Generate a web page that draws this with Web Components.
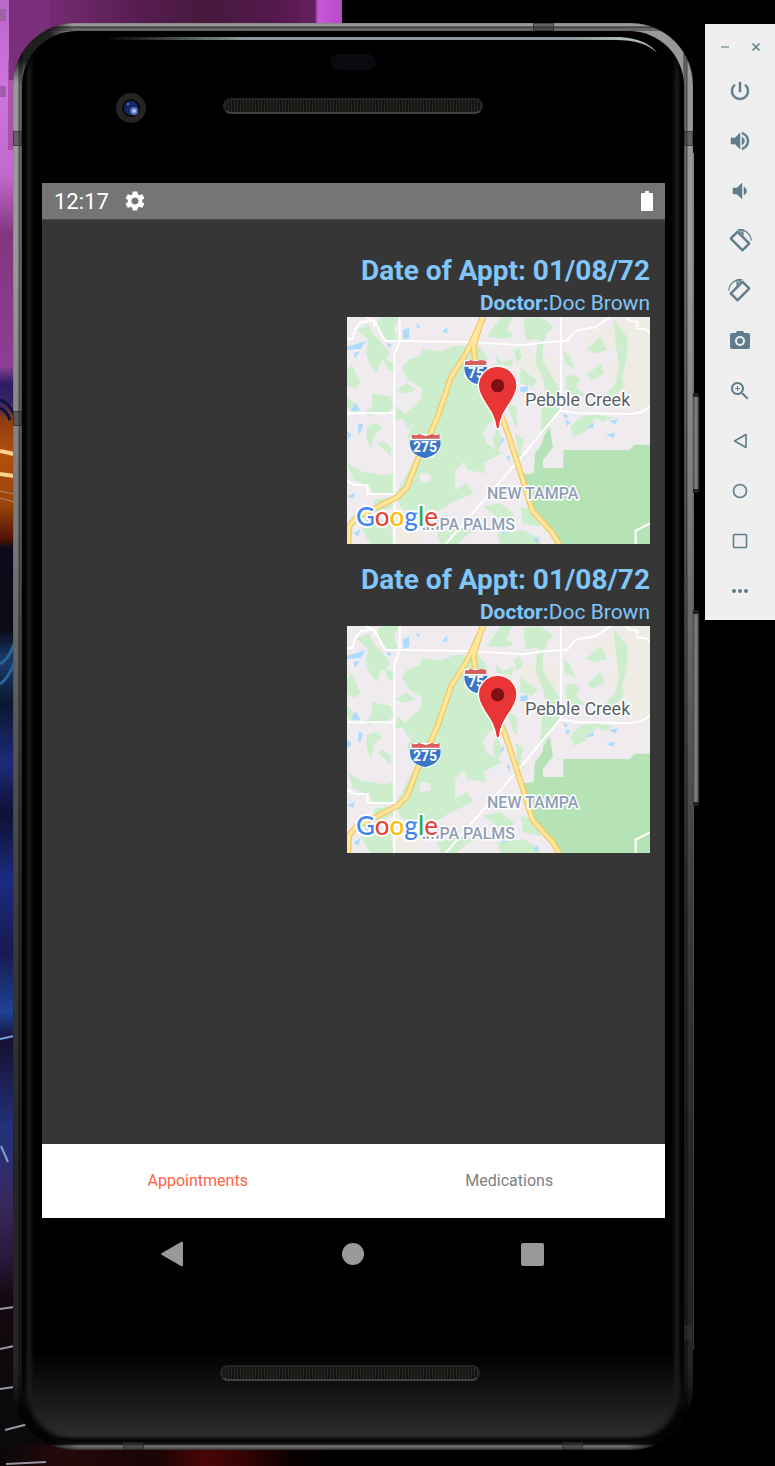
<!DOCTYPE html>
<html lang="en">
<head>
<meta charset="utf-8">
<meta name="viewport" content="width=device-width, initial-scale=1">
<title>Appointments</title>
<style>
body { margin: 0; background: #000; font-family: Roboto, "Liberation Sans", sans-serif; }
</style>
</head>
<body>
<emulator-desktop>
  <desk-wallpaper slot="wallpaper"></desk-wallpaper>
  <phone-frame>
    <status-bar slot="screen" time="12:17"></status-bar>
    <appointment-list slot="screen">
      <appointment-card date="01/08/72" doctor="Doc Brown"></appointment-card>
      <appointment-card date="01/08/72" doctor="Doc Brown"></appointment-card>
    </appointment-list>
    <tab-bar slot="screen"></tab-bar>
    <system-nav slot="nav"></system-nav>
  </phone-frame>
  <emulator-toolbar></emulator-toolbar>
</emulator-desktop>

<script>
const define = (name, html, setup) => {
  const template = document.createElement('template');
  template.innerHTML = html;
  customElements.define(name, class extends HTMLElement {
    constructor() {
      super();
      this.attachShadow({ mode: 'open' }).append(template.content.cloneNode(true));
    }
    connectedCallback() {
      if (setup) setup(this, this.shadowRoot);
    }
  });
};

define('emulator-desktop', `
<style>
:host { display: flex; align-items: flex-start; gap: 12px; position: relative; min-height: 100vh; box-sizing: border-box; padding: 23px 0 16px 13px; overflow: hidden; }
</style>
<slot name="wallpaper"></slot>
<slot></slot>`);

define('desk-wallpaper', `
<style>
:host { display: block; position: absolute; inset: 0 auto 0 0; width: 342px; }
svg { display: block; width: 100%; height: 100%; }
</style>
<svg viewBox="0 0 342 1466" preserveAspectRatio="none" aria-hidden="true">
  <defs>
    <linearGradient id="top" x1="0" x2="1" y1="0" y2="0">
      <stop offset="0" stop-color="#b55fc4"/><stop offset=".03" stop-color="#7b2d78"/><stop offset=".2" stop-color="#6f286b"/>
      <stop offset=".42" stop-color="#551c50"/><stop offset=".6" stop-color="#461a3c"/><stop offset=".82" stop-color="#56184f"/>
      <stop offset=".92" stop-color="#64205f"/><stop offset=".93" stop-color="#c659d6"/><stop offset="1" stop-color="#b84cc8"/>
    </linearGradient>
    <linearGradient id="left" x1="0" x2="0" y1="0" y2="1">
      <stop offset="0" stop-color="#b968c9"/><stop offset=".06" stop-color="#cf74dc"/><stop offset=".12" stop-color="#c169cc"/>
      <stop offset=".16" stop-color="#83357f"/><stop offset=".25" stop-color="#8c3f93"/><stop offset=".262" stop-color="#2b1c68"/>
      <stop offset=".275" stop-color="#3a2563"/><stop offset=".285" stop-color="#8a3b12"/><stop offset=".31" stop-color="#b34f0c"/>
      <stop offset=".345" stop-color="#99430a"/><stop offset=".368" stop-color="#4f1206"/><stop offset=".374" stop-color="#0d0b1b"/>
      <stop offset=".43" stop-color="#0a0a18"/><stop offset=".45" stop-color="#1a3c6c"/><stop offset=".48" stop-color="#0b1730"/>
      <stop offset=".52" stop-color="#1d2a7a"/><stop offset=".555" stop-color="#0d1034"/><stop offset=".6" stop-color="#1c2b80"/>
      <stop offset=".65" stop-color="#171a52"/><stop offset=".69" stop-color="#1f4393"/><stop offset=".71" stop-color="#161032"/>
      <stop offset=".77" stop-color="#23327b"/><stop offset=".82" stop-color="#39285e"/><stop offset=".86" stop-color="#2a1638"/>
      <stop offset=".885" stop-color="#140910"/><stop offset="1" stop-color="#0a0508"/>
    </linearGradient>
    <linearGradient id="foot" x1="0" x2="1" y1="0" y2="0">
      <stop offset="0" stop-color="#08080b"/><stop offset=".16" stop-color="#25080a"/><stop offset=".45" stop-color="#1a0405"/>
      <stop offset=".6" stop-color="#480606"/><stop offset=".72" stop-color="#320303"/><stop offset=".86" stop-color="#080000"/><stop offset="1" stop-color="#000"/>
    </linearGradient>
  </defs>
  <rect width="342" height="60" fill="url(#top)"/>
  <path d="M0 0H14V1466H0z" fill="url(#left)"/>
  <path d="M9 0H50V24L14 80H9z" fill="#7a2f7a"/>
  <rect x="8" y="60" width="6" height="90" fill="#83387f" opacity=".5"/>
  <rect y="9" width="6" height="12" fill="#9d63a6"/>
  <rect y="86" width="6" height="11" fill="#a35bab"/>
  <path d="M0 400q8 2 14 14M0 408q7 3 10 12" stroke="#0e1248" stroke-width="3" fill="none"/>
  <path d="M0 451l14 3M0 474l14 2" stroke="#ffd391" stroke-width="4"/>
  <path d="M0 491l14 3M0 498l14 4" stroke="#b4886f" stroke-width="1"/>
  <path d="M0 664q9-5 14-20M0 684q8-5 14-21" stroke="#2a6599" stroke-width="3" fill="none"/>
  <path d="M0 1039l14-3M1 1146l7 16" stroke="#79a0dc" stroke-width="2"/>
  <path d="M0 1380H20L80 1440V1466H0z" fill="#0b090c"/>
  <path d="M0 1445H342V1466H0z" fill="url(#foot)"/>
  <path d="M0 1309l14-2M0 1349l14-3M0 1389l14-2M5 1430l31-8M6 1464l40-2" stroke="#99959f" stroke-width="2"/>
</svg>`);

define('phone-frame', `
<style>
:host { display: block; flex: 1; min-width: 0; position: relative; }
.metal { position: relative; border-radius: 62px; padding: 8px 9px 8px;
  background:
   radial-gradient(circle at 18px 18px, #000c 0 20px, #0000 44px),
   radial-gradient(circle at 18px calc(100% - 18px), #000c 0 20px, #0000 50px),
   radial-gradient(circle at calc(100% - 18px) calc(100% - 18px), #000c 0 20px, #0000 50px),
   linear-gradient(180deg, #0000 3px, #222 4px, #0005 5px 8px, #0000 8px),
   linear-gradient(90deg, #0000 0 5px, #0008 6px, #0004 8px, #0009 9px, #0000 10px calc(100% - 10px), #0009 calc(100% - 9px), #0004 calc(100% - 8px), #0008 calc(100% - 6px), #0000 calc(100% - 5px)),
   linear-gradient(180deg, #999 0, #9a9a9a 16%, #777 36%, #555 50%, #3c3c3c 62%, #262626 80%, #242424 94%, #111 98%, #111 calc(100% - 6px), #777 calc(100% - 4px), #333 100%);
  box-shadow: inset 0 0 1px #111; }
.glass { position: relative; display: flex; flex-direction: column; border-radius: 55px; padding-bottom: 61px;
  background:
   linear-gradient(90deg, #0000 2px, #1b1b1b 7px, #0000 12px, #0000 calc(100% - 12px), #1b1b1b calc(100% - 7px), #0000 calc(100% - 2px)),
   linear-gradient(180deg, #000 calc(100% - 90px), #191919 calc(100% - 40px), #2d2d2d calc(100% - 6px), #0a0a0a calc(100% - 2px));
  background-color: #000; box-shadow: inset 0 0 5px 2px #000; }
.head { display: grid; grid-template-columns: 1fr 260px 1fr; align-items: center; justify-items: center; padding-top: 23px; row-gap: 19px; height: 129px; align-content: start; }
.sensor { grid-column: 2; width: 46px; height: 16px; border-radius: 8px; background: #080a10; }
.camera { grid-column: 1; margin: 4px 0 0 16px; width: 30px; height: 30px; }
.speaker { box-sizing: border-box; width: 260px; height: 16px; border: 2px solid #242423; border-bottom-color: #44423f; border-radius: 8px;
  background: repeating-linear-gradient(90deg, #2b2925 0 1px, #151412 1px 3px); }
.screen { display: flex; flex-direction: column; margin: 0 19px 0 20px; height: 1035px; background: #363636; }
.foot { display: grid; justify-items: center; padding: 75px 6px 0 0; }
.band { position: absolute; box-sizing: border-box; background: #3338; border: 1px solid #2228; }
.v { width: 9px; height: 15px; }
.h { width: 21px; height: 8px; }
.button { position: absolute; left: 100%; width: 6px; background: linear-gradient(90deg, #444, #8a8a8a 50%, #333); border-radius: 0 3px 3px 0; border: solid #222; border-width: 4px 0; box-sizing: border-box; }
.edge { position: absolute; left: 100%; top: 130px; width: 1px; bottom: 100px; background: linear-gradient(#888, #555 50%, #333); }
.shine { position: absolute; left: 0; top: 0; width: 100%; height: 40px; }
</style>
<div class="edge"></div>
<div class="button" style="top:370px;height:100px"></div>
<div class="button" style="top:587px;height:196px"></div>
<div class="metal">
  <div class="glass">
    <svg class="shine" viewBox="0 0 662 40" preserveAspectRatio="none" aria-hidden="true">
      <defs><linearGradient id="s" x1="0" x2="1" y1="0" y2="0"><stop offset="0" stop-color="#8b9799" stop-opacity="0"/><stop offset=".25" stop-color="#899598"/><stop offset=".85" stop-color="#899598"/><stop offset=".95" stop-color="#b3c2bf"/><stop offset="1" stop-color="#8d9796"/></linearGradient></defs>
      <path d="M83 6H598Q626 8 635 22Q622 9 594 9H83z" fill="url(#s)"/>
    </svg>
    <div class="head">
      <div class="sensor"></div>
      <svg class="camera" viewBox="0 0 30 30" aria-hidden="true">
        <circle cx="15" cy="15" r="15" fill="#252324"/><circle cx="15" cy="15" r="9" fill="#0a0b13"/>
        <circle cx="15" cy="15" r="7" fill="#142766"/><circle cx="18" cy="18" r="4" fill="#5571bd"/>
        <circle cx="18" cy="18" r="2" fill="#b5c6ee"/><circle cx="12" cy="11" r="1" fill="#7893df"/>
      </svg>
      <div class="speaker"></div>
    </div>
    <div class="screen"><slot name="screen"></slot></div>
    <slot name="nav"></slot>
    <div class="foot"><div class="speaker"></div></div>
  </div>
  <div class="band v" style="left:0;top:108px"></div>
  <div class="band v" style="left:0;top:388px"></div>
  <div class="band v" style="right:0;top:108px"></div>
  <div class="band v" style="right:0;top:1302px"></div>
  <div class="band h" style="right:139px;top:0"></div>
  <div class="band h" style="left:110px;bottom:0"></div>
  <div class="band h" style="right:110px;bottom:0"></div>
</div>`);

define('status-bar', `
<style>
:host { display: flex; align-items: center; gap: 14px; height: 36px; padding: 0 12px; background: #757575; border-bottom: 1px solid #484848; color: #fff; font-size: 22px; line-height: 26px; }
time { padding-top: 2px; }
svg { display: block; }
.gear { width: 24px; height: 24px; }
.battery { width: 12px; height: 20px; margin-left: auto; }
</style>
<time></time>
<svg class="gear" viewBox="0 0 24 24" fill="#fff" role="img" aria-label="Settings"><path d="M19.14 12.94c.04-.3.06-.61.06-.94 0-.32-.02-.64-.07-.94l2.03-1.58c.18-.14.23-.41.12-.61l-1.92-3.32c-.12-.22-.37-.29-.59-.22l-2.39.96c-.5-.38-1.03-.7-1.62-.94l-.36-2.54c-.04-.24-.24-.41-.48-.41h-3.84c-.24 0-.43.17-.47.41l-.36 2.54c-.59.24-1.13.57-1.62.94l-2.39-.96c-.22-.08-.47 0-.59.22L2.74 8.87c-.12.21-.08.47.12.61l2.03 1.58c-.05.3-.09.63-.09.94s.02.64.07.94l-2.03 1.58c-.18.14-.23.41-.12.61l1.92 3.32c.12.22.37.29.59.22l2.39-.96c.5.38 1.03.7 1.62.94l.36 2.54c.05.24.24.41.48.41h3.84c.24 0 .44-.17.47-.41l.36-2.54c.59-.24 1.13-.56 1.62-.94l2.39.96c.22.08.47 0 .59-.22l1.92-3.32c.12-.22.07-.47-.12-.61l-2.01-1.58zM12 15.6c-1.98 0-3.6-1.62-3.6-3.6s1.62-3.6 3.6-3.6 3.6 1.62 3.6 3.6-1.62 3.6-3.6 3.6z"/></svg>
<svg class="battery" viewBox="0 0 12 20" fill="#fff" role="img" aria-label="Battery full"><path d="M4 0h4v2h3a1 1 0 0 1 1 1v16a1 1 0 0 1-1 1H1a1 1 0 0 1-1-1V3a1 1 0 0 1 1-1h3z"/></svg>`,
(el, root) => { root.querySelector('time').textContent = el.getAttribute('time'); });

define('appointment-list', `
<style>
:host { display: flex; flex-direction: column; align-items: flex-end; gap: 17px; flex: 1; padding: 32px 15px 0 0; }
</style>
<slot></slot>`);

define('appointment-card', `
<style>
:host { display: flex; flex-direction: column; align-items: flex-end; color: #81c6fb; }
h2 { margin: 0; font-size: 28px; line-height: 37px; font-weight: 700; }
p { margin: 0; font-size: 21px; line-height: 28px; }
</style>
<h2>Date of Appt: <span class="date"></span></h2>
<p><b>Doctor:</b><span class="doctor"></span></p>
<map-view></map-view>`,
(el, root) => {
  root.querySelector('.date').textContent = el.getAttribute('date');
  root.querySelector('.doctor').textContent = el.getAttribute('doctor');
});

define('map-view', `
<style>
:host { display: block; width: 303px; }
svg { display: block; width: 100%; }
text { paint-order: stroke; stroke: #fff; stroke-width: 3px; stroke-linejoin: round; }
.area { fill: #8f9db5; font-size: 16px; font-weight: 500; }
.place { fill: #5a5f66; font-size: 18px; }
.route { fill: #fff; stroke: none; font-size: 14px; font-weight: 700; text-anchor: middle; }
.brand { font: 500 26px Lato, sans-serif; stroke-width: 4px; }
</style>
<svg viewBox="0 0 303 227" role="img" aria-label="Map of New Tampa">
  <rect width="303" height="227" fill="#efebef"/>
  <g transform="scale(.33333) translate(-20 -231)">
    <path fill="#efece6" d="M720 300L800 262 850 231H929V500L890 510 840 490 800 400 840 330zM540 340L650 350V418H540zM160 790L240 850 235 912H160z"/>
    <g fill="#cdeecd">
      <path d="M235 350L248 328 300 334 350 316 385 322 400 300 440 350 444 390 470 540 446 548 428 580 440 612 486 640 430 668 436 700 380 690 372 664 345 690 344 752 378 728 400 760 330 790 300 810 240 850 180 800 165 766 200 700 226 650 200 590 216 560 196 520 240 480 246 446 204 420 184 384 205 358z"/>
      <path d="M118 231H178L160 262 172 300 140 300 104 262zM50 270L84 252 100 282 150 340 140 356 120 366 110 400 86 370 76 336 84 300zM20 390L34 372 60 430 44 446 20 436zM130 356L162 370 160 400 140 384zM96 460L150 470 160 500 140 520 102 516 92 530 70 520 94 500zM20 470L60 510 40 518 20 500zM80 558L110 548 126 566 104 580 92 628 78 596zM110 610L130 604 154 624 150 648 130 626zM20 668L60 694 130 706 160 700V764L96 766 90 740 40 720zM100 780L160 770 158 800 110 820zM60 860L100 830 150 850 160 912H90zM170 500L214 540 208 570 186 536 164 540zM166 450L200 430 226 450 190 462z"/>
      <path d="M440 290L480 231H516L500 270 520 288 486 296zM548 236L600 231 640 260 620 280 610 310 590 296 556 300zM590 316L610 300 606 360 628 400 656 440 662 500 620 570 600 590 604 510 618 470 608 420 586 366zM520 330L538 322 546 350 530 366zM464 344L486 366 520 354 514 380 470 372zM668 330L690 350 706 390 674 370zM674 410L700 402 720 420 706 440 740 470 680 462zM736 330L780 290 800 330 766 340zM740 404L780 370 792 400 756 420zM820 240L860 290 860 350 846 410 850 440 810 480 790 470 826 430 836 380 826 310zM540 380L560 400 590 420 576 440 540 430zM690 560L720 530 780 520 730 580 700 590zM760 524L820 532 786 546z"/>
      <path d="M500 490L528 500 532 560 520 550zM524 580L550 600 540 640 560 660 534 650zM470 560L486 600 470 640 456 600zM430 800L480 790 520 820 510 850 480 840zM540 800L590 812 600 860 548 850zM470 880L550 870 600 900V912H480zM566 700L600 690 590 730zM360 860L400 870 350 912H300L290 880z"/>
    </g>
    <path fill="#b5e3b5" d="M669 630H868L882 614H929V912H660L640 880 580 812 545 702H580L584 640 606 610 610 590 628 562 638 622 608 660V684H669z"/>
    <path fill="#efebef" d="M236 706L244 698 270 704 272 724 238 730 240 716z"/>
    <g fill="#abdbff">
      <path d="M20 320L76 304 62 326 20 330zM40 340L58 334 44 356zM187 272L206 262 207 292 190 300zM228 250L241 262 230 264zM306 276L320 260 321 280zM138 310L156 312 146 324zM46 488L60 512 32 512zM54 550L68 552 62 576 54 582zM20 572L34 584 22 600zM20 768L44 760 38 776zM70 826L90 830 80 850zM40 880L60 868 54 890zM540 442L562 438 562 458 540 456zM666 520L684 528 676 536zM674 540L690 546 680 558zM736 564L760 548 760 562zM808 542L834 538 824 554zM796 584L824 578 820 594zM486 590L492 600 478 616zM498 650L508 648 508 668zM482 870L500 878 488 886zM580 896L596 890 590 912z"/>
    </g>
    <g fill="none" stroke="#fff" stroke-width="6">
      <path d="M20 298H36L44 268 62 246 102 242 134 302 390 306 550 316 600 308 680 302 706 272 764 262 812 231M76 231L102 244V262M178 231V306L162 342V912M20 520H162M20 722L40 734 82 736V762H162M662 231V508L536 660 316 912M662 512L716 520 874 522 904 516 929 500M856 231L870 242 892 246 890 266 918 268 929 280M886 912V872L929 850"/>
    </g>
    <g fill="none" stroke-linejoin="round">
      <path stroke="#efc765" stroke-width="18" d="M430 231L380 336 332 412 292 530 256 612 232 658 200 742 172 770 110 802 50 830 26 860 24 912M426 231L400 320 404 362M480 520L504 584 546 714 576 812 636 878 656 912"/>
      <path stroke="#ffe69a" stroke-width="11" d="M430 231L380 336 332 412 292 530 256 612 232 658 200 742 172 770 110 802 50 830 26 860 24 912M426 231L400 320 404 362M480 520L504 584 546 714 576 812 636 878 656 912"/>
    </g>
    <g>
      <path fill="#fff" d="M370 360H440V384L438 412Q428 428 408 436 384 430 372 408z"/>
      <path fill="#d75f5c" d="M374 362Q382 366 390 360L406 364 422 360 438 362V375H374z"/>
      <path fill="#3976ca" d="M372 380H440Q440 424 408 432 372 420 372 380z"/>
      <path fill="#fff" d="M212 582H300V630L280 650 254 658 226 646 208 620z"/>
      <path fill="#d75f5c" d="M214 582Q224 590 236 582L256 588 276 582Q288 588 298 582V596H214z"/>
      <path fill="#3976ca" d="M210 601H300Q306 642 254 655 202 642 210 601z"/>
    </g>
  </g>
  <text class="route" x="129" y="61">75</text>
  <text class="route" x="78" y="135">275</text>
  <text class="area" x="140" y="182">NEW TAMPA</text>
  <text class="area" x="168" y="213" text-anchor="end">TAMPA PALMS</text>
  <text class="place" x="178" y="89">Pebble Creek</text>
  <g transform="scale(.33333) translate(-20 -231)">
    <path fill="#e93535" stroke="#fff" stroke-width="4" d="M472 379C440 379 414 405 414 437 414 456 424 472 434 488 450 512 464 532 467 562Q472 572 478 562C480 532 494 512 510 488 520 472 530 456 530 437 530 405 504 379 472 379z"/>
    <circle cx="472" cy="437" r="20" fill="#7f1012"/>
  </g>
  <text class="brand" x="9" y="209"><tspan fill="#4285f4">G</tspan><tspan fill="#ea4335">o</tspan><tspan fill="#fbbc05">o</tspan><tspan fill="#4285f4">g</tspan><tspan fill="#34a853">l</tspan><tspan fill="#ea4335">e</tspan></text>
</svg>`);

define('tab-bar', `
<style>
:host { display: block; height: 74px; background: #fff; }
nav { display: grid; grid-template-columns: 1fr 1fr; height: 100%; }
a { display: grid; place-items: center; color: #808080; font-size: 16px; line-height: 20px; text-decoration: none; }
a[aria-current] { color: #ff6347; }
</style>
<nav><a href="#appointments" aria-current="page">Appointments</a><a href="#medications">Medications</a></nav>`);

define('system-nav', `
<style>
:host { display: flex; justify-content: center; gap: 156px; height: 72px; align-items: center; }
button { all: unset; display: block; width: 24px; height: 26px; }
svg { display: block; }
</style>
<button aria-label="Back"><svg width="24" height="26" fill="#999"><path d="M20 1Q22 0 22 2V24Q22 26 20 25L1 14Q-1 13 1 12z"/></svg></button>
<button aria-label="Home"><svg width="24" height="26" fill="#999"><circle cx="12" cy="13" r="11"/></svg></button>
<button aria-label="Recents"><svg width="24" height="26" fill="#999"><rect x="0" y="2" width="23" height="23" rx="2"/></svg></button>`);

define('emulator-toolbar', `
<style>
:host { display: block; flex: none; width: 70px; margin-top: 1px; padding-bottom: 4px; background: #efefef; position: relative; color: #607d8b; }
button { all: unset; display: grid; place-items: center; }
.window { display: grid; grid-template-columns: 31px 31px; justify-content: center; height: 42px; padding-top: 4px; box-sizing: border-box; }
.tools { display: grid; grid-auto-rows: 50px; }
svg { display: block; width: 24px; height: 24px; fill: currentColor; }
.line { fill: none; stroke: currentColor; stroke-width: 1.6; }
</style>
<div class="window">
  <button aria-label="Minimize"><svg class="line" viewBox="0 0 24 24"><path d="M8 12h8" opacity=".7"/></svg></button>
  <button aria-label="Close"><svg class="line" viewBox="0 0 24 24"><path d="M8.500 8.500l7 7M15.500 8.500l-7 7"/></svg></button>
</div>
<div class="tools">
  <button aria-label="Power"><svg viewBox="0 0 24 24" stroke="currentColor" stroke-width=".5"><path d="M13 3h-2v10h2V3zm4.830 2.170l-1.420 1.420C17.990 7.860 19 9.810 19 12c0 3.870-3.130 7-7 7s-7-3.130-7-7c0-2.190 1.010-4.140 2.580-5.420L6.170 5.170C4.230 6.820 3 9.260 3 12c0 4.970 4.030 9 9 9s9-4.030 9-9c0-2.740-1.230-5.180-3.170-6.830z"/></svg></button>
  <button aria-label="Volume up"><svg viewBox="0 0 24 24" stroke="currentColor" stroke-width=".5"><path d="M3 9v6h4l5 5V4L7 9H3zm13.500 3c0-1.770-1.020-3.290-2.500-4.030v8.050c1.480-.73 2.500-2.250 2.500-4.020zM14 3.230v2.060c2.890.86 5 3.540 5 6.710s-2.110 5.850-5 6.710v2.060c4.010-.91 7-4.490 7-8.770s-2.990-7.860-7-8.770z"/></svg></button>
  <button aria-label="Volume down"><svg viewBox="0 0 24 24" stroke="currentColor" stroke-width=".5"><path d="M18.500 12c0-1.770-1.020-3.290-2.500-4.030v8.050c1.480-.73 2.500-2.250 2.500-4.020zM5 9v6h4l5 5V4L9 9H5z"/></svg></button>
  <button aria-label="Rotate left"><svg viewBox="0 0 24 24"><path fill-rule="evenodd" d="M8.500 2Q9.500 1 10.500 2L22 13.500Q23 14.500 22 15.500L15.500 22Q14.500 23 13.500 22L2 10.500Q1 9.500 2 8.500zM9.500 4.500L4.500 9.500 14.500 19.500 19.500 14.500z"/><path d="M15 5.500V.5L10.500.500zM12 .8C18 .8 23 5.500 23.200 11.500" fill="none" stroke="currentColor" stroke-width="1.200"/></svg></button>
  <button aria-label="Rotate right"><svg viewBox="0 0 24 24"><g transform="matrix(-1 0 0 1 24 0)"><path fill-rule="evenodd" d="M8.500 2Q9.500 1 10.500 2L22 13.500Q23 14.500 22 15.500L15.500 22Q14.500 23 13.500 22L2 10.500Q1 9.500 2 8.500zM9.500 4.500L4.500 9.500 14.500 19.500 19.500 14.500z"/><path d="M15 5.500V.5L10.500.500zM12 .8C18 .8 23 5.500 23.200 11.500" fill="none" stroke="currentColor" stroke-width="1.200"/></g></svg></button>
  <button aria-label="Screenshot"><svg viewBox="0 1 24 24"><path d="M9 3L7.500 5H4Q2 5 2 7V19Q2 21 4 21H20Q22 21 22 19V7Q22 5 20 5H16.500L15 3z"/><circle cx="12" cy="13" r="5" fill="#efefef"/><circle cx="12" cy="13" r="3"/></svg></button>
  <button aria-label="Zoom"><svg viewBox="0 0 24 24"><path d="M15.500 14h-.79l-.28-.27C15.410 12.590 16 11.110 16 9.500 16 5.910 13.090 3 9.500 3S3 5.910 3 9.500 5.910 16 9.500 16c1.610 0 3.090-.59 4.230-1.570l.27.28v.79l5 4.990L20.490 19l-4.990-5zm-6 0C7.010 14 5 11.990 5 9.500S7.010 5 9.500 5 14 7.010 14 9.500 11.990 14 9.500 14z"/><path d="M12 9h-2V7H9v2H7v1h2v2h1v-2h2z"/></svg></button>
  <button aria-label="Back"><svg class="line" viewBox="0 0 24 24"><path d="M18 5.500V18.500L6.500 12z" stroke-linejoin="round"/></svg></button>
  <button aria-label="Home"><svg class="line" viewBox="0 0 24 24"><circle cx="12" cy="12" r="6.500"/></svg></button>
  <button aria-label="Overview"><svg class="line" viewBox="0 0 24 24"><rect x="5.500" y="5.500" width="13" height="13" rx="1"/></svg></button>
  <button aria-label="More"><svg viewBox="0 0 24 24"><circle cx="6" cy="12" r="2"/><circle cx="12" cy="12" r="2"/><circle cx="18" cy="12" r="2"/></svg></button>
</div>`);
</script>
</body>
</html>
